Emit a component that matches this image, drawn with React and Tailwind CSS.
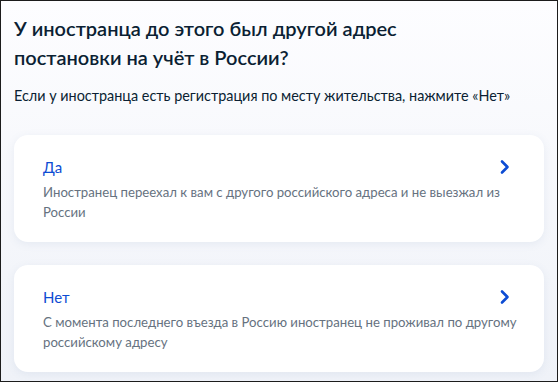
import React from 'react'

const OPTIONS = [
  {
    title: 'Да',
    lines: ['Иностранец переехал к вам с другого российского адреса и не выезжал из', 'России'],
  },
  {
    title: 'Нет',
    lines: ['С момента последнего въезда в Россию иностранец не проживал по другому', 'российскому адресу'],
  },
]

function Chevron() {
  return (
    <svg width="10" height="16" viewBox="0 0 10 16" fill="none" className="mr-[5px] shrink-0">
      <path d="M2 2.5 L7.5 8 L2 13.5" stroke="#0d4cd3" strokeWidth="2.6" strokeLinecap="round" strokeLinejoin="round" />
    </svg>
  )
}

function OptionCard({ title, lines }) {
  return (
    <button className="block w-full text-left bg-white rounded-[14px] shadow-[0_2px_8px_rgba(102,125,165,0.10)] pt-[21px] pb-[20px] px-[29px]">
      <div className="flex items-center justify-between">
        <div className="text-[15px] leading-[22px] text-[#0d4cd3]">{title}</div>
        <Chevron />
      </div>
      <div className="mt-[4px] text-[13.2px] leading-[20px] text-[#66727f]">
        {lines.map(l => (
          <div key={l} className="whitespace-nowrap">{l}</div>
        ))}
      </div>
    </button>
  )
}

export default function App() {
  return (
    <div
      className="w-[558px] h-[382px] overflow-hidden border border-[#1c1c1c] bg-gradient-to-b from-[#fdfdff] to-[#eff2f8] px-[13px] pt-[13px]"
      style={{ fontFamily: 'Lato, "Noto Sans", sans-serif' }}
    >
      <h1 className="text-[20px] leading-[29px] font-semibold text-[#0b1f33]">
        У иностранца до этого был другой адрес
        <br />
        постановки на учёт в России?
      </h1>
      <p className="mt-[14px] text-[14.4px] leading-[20px] text-[#0b1f33]">
        Если у иностранца есть регистрация по месту жительства, нажмите «Нет»
      </p>
      <div className="mt-[29px] flex flex-col gap-[23px]">
        {OPTIONS.map(o => (
          <OptionCard key={o.title} title={o.title} lines={o.lines} />
        ))}
      </div>
    </div>
  )
}
